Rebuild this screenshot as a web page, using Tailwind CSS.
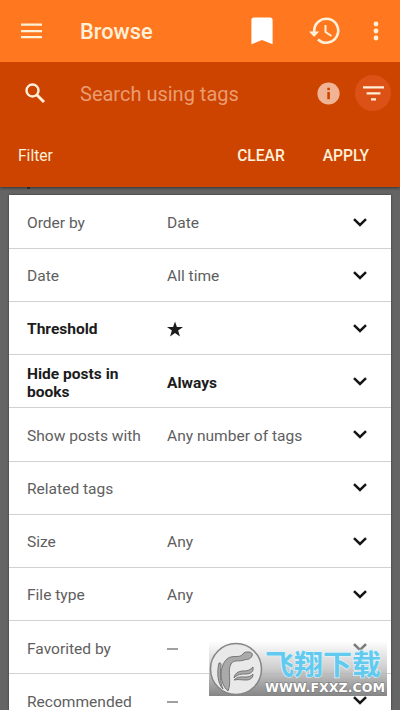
<!DOCTYPE html>
<html lang="en">
<head>
<meta charset="utf-8">
<title>Browse</title>
<script src="https://cdn.jsdelivr.net/npm/@tailwindcss/browser@4"></script>
</head>
<body class="w-[400px] h-[710px] overflow-hidden bg-[#656565] font-['Roboto',sans-serif]">
<div class="relative flex h-[710px] flex-col overflow-hidden">
  <div class="relative z-10 shadow-[0_1px_3px_rgba(0,0,0,0.5)]">
    <header class="flex h-[62px] items-center bg-[#ff781f] text-[#fff0d9]">
      <svg class="ml-[21px] h-[16px] w-[21px] shrink-0" viewBox="0 0 21 16" fill="currentColor"><path d="M0 .4h21v2.3H0zM0 7h21v2.3H0zM0 13h21v2.3H0z"/></svg>
      <h1 class="ml-[38px] flex-1 text-[21.8px] font-medium leading-6 pt-[2px]">Browse</h1>
      <svg class="mr-[36px] h-[28px] w-[22px] text-white" viewBox="0 0 22 28" fill="currentColor"><path d="M3 .5h16a2.6 2.6 0 0 1 2.6 2.6v24.2L11 23 .4 27.300V3.100A2.600 2.600 0 0 1 3 .5z"/></svg>
      <svg class="mr-[33px] h-[28px] w-[31px]" viewBox="0 0 31 28" fill="none" stroke="currentColor"><path d="M5.200 15.500v-1.500a12 12 0 1 1 3.800 8.500" stroke-width="2.600"/><path d="M0 14.500h10.200L5.100 20z" fill="currentColor" stroke="none"/><path d="M16.500 8v7l6 4" stroke-width="2"/></svg>
      <svg class="mr-[21px] h-[20px] w-[6px]" viewBox="0 0 6 20" fill="currentColor"><circle cx="3" cy="3" r="2.400"/><circle cx="3" cy="10" r="2.400"/><circle cx="3" cy="17" r="2.400"/></svg>
    </header>
    <div class="flex h-[62px] items-center bg-[#cc4400] text-[#fff0d9]">
      <svg class="ml-[25px] h-[20px] w-[20px] shrink-0" viewBox="0 0 20 20" fill="none" stroke="currentColor"><circle cx="7.500" cy="7.500" r="6" stroke-width="2.400"/><path d="M12 12l7 7" stroke-width="2.900"/></svg>
      <span class="ml-[35px] flex-1 text-[20px] leading-6 pt-[1px] text-[#eb9b70]">Search using tags</span>
      <svg class="mr-[15px] h-[23px] w-[23px]" viewBox="0 0 23 23"><circle cx="11.500" cy="11.500" r="11.100" fill="#f0b394"/><path d="M10.300 5.800h2.600v2.500h-2.600zM10.300 10h2.600v7.200h-2.600z" fill="#cc4400"/></svg>
      <span class="mr-[9px] flex h-[36px] w-[36px] items-center justify-center rounded-full bg-[#dc5116]">
        <svg class="h-[15px] w-[21px]" viewBox="0 0 21 15" fill="currentColor"><path d="M0 .3h21v2.300H0zM3.600 6.300h13.800v2.300H3.600zM8 12.200h5v2.300H8z"/></svg>
      </span>
    </div>
    <div class="flex h-[63px] items-center bg-[#cc4400] text-[15.600px] text-[#fff0d9]">
      <span class="ml-[18px] flex-1 pt-[2px]">Filter</span>
      <span class="mr-[38px] pt-[2px] font-medium">CLEAR</span>
      <span class="mr-[31px] pt-[2px] font-medium">APPLY</span>
    </div>
    <div class="absolute left-[27px] top-[187px] h-[2px] w-[3px] bg-[#2b2b2b]"></div>
  </div>
  <main id="rows" class="ml-[9px] mt-[8px] w-[382px] shrink-0 bg-white pt-[0.700px] text-[15.550px] leading-[18px] text-[#5e5e5e] shadow-[0_0_2px_rgba(0,0,0,0.5)]"></main>
  <div class="absolute left-[209px] top-[642px] h-[54px] w-[178px] bg-linear-to-b from-[#fafafa]/40 via-[#c4c4c4]/85 to-[#858585]">
    <svg class="h-[54px] w-[178px]" viewBox="0 0 178 54">
      <circle cx="27" cy="27" r="25.500" fill="#e9e9e9" stroke="#858585" stroke-width="1.500"/>
      <g fill="#aaaaaa" stroke="#747474" stroke-width="1" stroke-linejoin="round">
        <path d="M19 49C9 40 11 23 18 17c6-5 12 0 16-5 1-2 3-2 5-2 3 0 5 1 4 4-2 4-5 3-8 4-5 2-10-1-13 4-4 6 1 18-3 27z"/>
        <path d="M25 36c1-6 6-7 10-7 4 0 6-1 9-4 1 5-3 7-7 7-5 0-8 0-12 4zM25 38c4-4 8-3 12-3 3 0 5-1 7-3 0 5-4 6-7 6-5 0-8-1-12 0z"/>
        <path d="M14 47C8 41 8 29 10 21c2 0 2 0 2 2-1 9-1 17 2 24z"/>
      </g>
      <text x="56" y="33" textLength="116" lengthAdjust="spacingAndGlyphs" font-family="'Noto Sans CJK SC', sans-serif" font-size="28" font-weight="700" fill="#62caef" stroke="#e3f6fd" stroke-width="1.200" paint-order="stroke">飞翔下载</text>
      <text x="56" y="50" textLength="120" lengthAdjust="spacingAndGlyphs" font-family="'DejaVu Sans', sans-serif" font-size="11.500" font-weight="700" fill="#fff" stroke="#777" stroke-width="1" paint-order="stroke">WWW.FXXZ.COM</text>
    </svg>
  </div>
</div>
<script>
const rows = [
  ['Order by', 'Date'], ['Date', 'All time'], ['Threshold', '★', true],
  ['Hide posts in books', 'Always', true], ['Show posts with', 'Any number of tags'],
  ['Related tags', ''], ['Size', 'Any'], ['File type', 'Any'],
  ['Favorited by', '–'], ['Recommended', '–']
];
const star = '<svg class="h-[16px] w-[16px]" viewBox="0 0 20 19" fill="currentColor" aria-label="★"><path d="M10 0l2.400 7H20l-6.100 4.500L16.200 19 10 14.500 3.800 19l2.300-7.500L0 7h7.600z"/></svg>';
const dash = '<svg class="h-[2px] w-[11px]" viewBox="0 0 11 2" fill="#777777"><path d="M0 .3h11v1.400H0z"/></svg>';
document.getElementById('rows').innerHTML = rows.map(([label, value, bold]) =>
  `<div class="flex h-[53.200px] items-center border-b border-[#d2d2d2] pl-[18px] pr-[24px] pt-[2.500px] ${bold ? 'font-bold text-[#1c1c1c]' : ''}">
    <span class="w-[140px] shrink-0 pr-[22px]"><span class="${bold ? '' : 'whitespace-nowrap'}">${label}</span></span>
    <span class="flex-1">${value === '★' ? star : value === '–' ? dash : value}</span>
    <svg class="relative -top-px h-[9px] w-[14px] shrink-0 text-[#151515]" viewBox="0 0 14 9" fill="none" stroke="currentColor" stroke-width="2.500"><path d="M1 1.200l6 5.800 6-5.800"/></svg>
  </div>`).join('');
</script>
</body>
</html>
